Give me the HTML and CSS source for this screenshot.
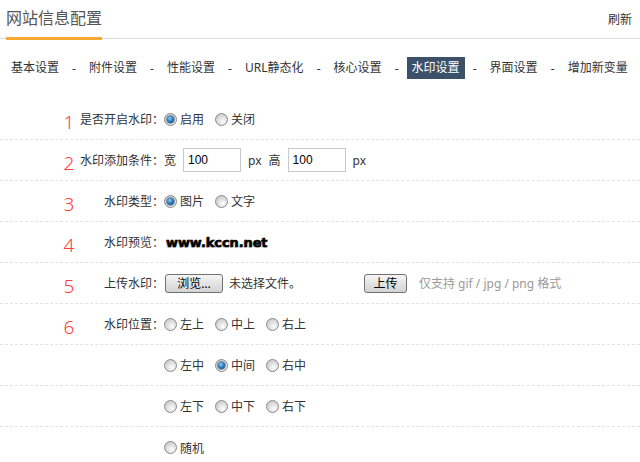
FILE: index.html
```html
<!DOCTYPE html>
<html lang="zh-CN">
<head>
<meta charset="utf-8">
<title>网站信息配置</title>
<link rel="stylesheet" href="styles.css">
</head>
<body>
<div class="header">
  <div class="title">网站信息配置</div>
  <div class="refresh">刷新</div>
</div>
<div class="nav">
  <span class="item">基本设置</span><span class="sep">-</span>
  <span class="item">附件设置</span><span class="sep">-</span>
  <span class="item">性能设置</span><span class="sep">-</span>
  <span class="item">URL静态化</span><span class="sep">-</span>
  <span class="item">核心设置</span><span class="sep">-</span>
  <span class="item active">水印设置</span><span class="sep">-</span>
  <span class="item">界面设置</span><span class="sep">-</span>
  <span class="item">增加新变量</span>
</div>
<div class="form">
  <div class="row">
    <span class="num">1</span><span class="label">是否开启水印：</span>
    <span class="opt"><span class="radio on"></span>启用</span>
    <span class="opt"><span class="radio"></span>关闭</span>
  </div>
  <div class="row">
    <span class="num">2</span><span class="label">水印添加条件：</span>
    <span class="txt">宽</span><span class="input">100</span><span class="txt">px</span>
    <span class="txt">高</span><span class="input">100</span><span class="txt">px</span>
  </div>
  <div class="row">
    <span class="num">3</span><span class="label">水印类型：</span>
    <span class="opt"><span class="radio on"></span>图片</span>
    <span class="opt"><span class="radio"></span>文字</span>
  </div>
  <div class="row">
    <span class="num">4</span><span class="label">水印预览：</span>
    <span class="preview">www.kccn.net</span>
  </div>
  <div class="row">
    <span class="num">5</span><span class="label">上传水印：</span>
    <span class="btn browse">浏览…</span><span class="nofile">未选择文件。</span>
    <span class="btn upload">上传</span><span class="hint">仅支持 gif / jpg / png 格式</span>
  </div>
  <div class="row">
    <span class="num">6</span><span class="label">水印位置：</span>
    <span class="opt"><span class="radio"></span>左上</span>
    <span class="opt"><span class="radio"></span>中上</span>
    <span class="opt"><span class="radio"></span>右上</span>
  </div>
  <div class="row">
    <span class="num"></span><span class="label"></span>
    <span class="opt"><span class="radio"></span>左中</span>
    <span class="opt"><span class="radio on"></span>中间</span>
    <span class="opt"><span class="radio"></span>右中</span>
  </div>
  <div class="row">
    <span class="num"></span><span class="label"></span>
    <span class="opt"><span class="radio"></span>左下</span>
    <span class="opt"><span class="radio"></span>中下</span>
    <span class="opt"><span class="radio"></span>右下</span>
  </div>
  <div class="row last">
    <span class="num"></span><span class="label"></span>
    <span class="opt"><span class="radio"></span>随机</span>
  </div>
</div>
</body>
</html>
```
FILE: styles.css
```css
* { box-sizing: border-box; }
body {
  margin: 0;
  background: #fff;
  color: #333;
  font-family: "Noto Sans", "Noto Sans CJK SC", sans-serif;
  font-size: 12px;
}
.header {
  display: flex;
  justify-content: space-between;
  align-items: flex-start;
  height: 39px;
  border-bottom: 1px solid #dcdcdc;
  padding: 0 8px 0 6px;
}
.title {
  height: 40px;
  font-size: 16px;
  line-height: 37px;
  color: #555;
  border-bottom: 3px solid #f9a832;
}
.refresh {
  line-height: 40px;
  color: #333;
}
.nav {
  display: flex;
  align-items: center;
  margin-top: 18px;
  padding-left: 6px;
  height: 22px;
}
.item {
  padding: 0 5px;
  line-height: 22px;
  color: #333;
  white-space: nowrap;
}
.item.active {
  background: #3b5169;
  color: #fff;
}
.sep {
  width: 20px;
  text-align: center;
  color: #333;
}
.form {
  margin-top: 20px;
}
.row {
  display: flex;
  align-items: center;
  height: 41px;
  border-bottom: 1px dashed #e2e2e2;
}
.row.last { border-bottom: none; }
.num {
  width: 18px;
  margin-left: 60px;
  margin-right: 2px;
  padding-top: 6px;
  font-size: 19px;
  font-weight: 300;
  line-height: 20px;
  color: #ff3b3b;
  text-align: center;
}
.label {
  width: 84px;
  text-align: right;
  white-space: nowrap;
}
.opt {
  display: inline-flex;
  align-items: center;
  margin-right: 11px;
}
.radio {
  width: 13px;
  height: 13px;
  margin-right: 3px;
  border-radius: 50%;
  border: 1px solid #8a8a8a;
  background: radial-gradient(circle at 62% 68%, #ffffff 0, #e9e9e9 30%, #bdbdbd 100%);
  display: inline-flex;
  align-items: center;
  justify-content: center;
}
.radio.on::after {
  content: "";
  width: 7px;
  height: 7px;
  border-radius: 50%;
  background: radial-gradient(circle at 40% 35%, #8fd0f5 0, #2c7fc0 45%, #0d3c66 100%);
  box-shadow: 0 0 0 0.5px #123a5e;
}
.txt { margin-right: 7px; }
.input {
  width: 58px;
  height: 24px;
  border: 1px solid #c8c8c8;
  padding-left: 4px;
  line-height: 22px;
  font-family: "Liberation Sans", Arial, sans-serif;
  font-size: 12px;
  color: #000;
  margin-right: 7px;
}
.preview {
  font-family: "DejaVu Sans", sans-serif;
  font-weight: bold;
  font-size: 13px;
  color: #000;
  letter-spacing: -0.1px;
  -webkit-text-stroke: 0.6px #000;
  text-shadow: -1px 1px 1px #c8c8c8;
  margin-left: 2px;
}
.btn {
  display: inline-block;
  height: 19px;
  line-height: 17px;
  border: 1px solid #707070;
  border-radius: 3px;
  background: linear-gradient(#f6f6f6, #e3e3e3 50%, #d4d4d4);
  color: #000;
  text-align: center;
}
.browse { width: 58px; margin-left: 1px; }
.nofile { margin-left: 6px; width: 135px; }
.upload { width: 43px; }
.hint { margin-left: 12px; color: #999; }
```
